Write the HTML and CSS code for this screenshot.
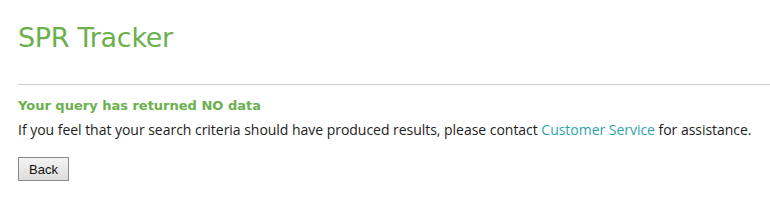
FILE: index.html
```html
<!DOCTYPE html>
<html>
<head>
<meta charset="utf-8">
<link rel="stylesheet" href="styles.css">
</head>
<body>
<div class="page">
  <h1 class="title">SPR Tracker</h1>
  <hr class="rule">
  <h2 class="notice">Your query has returned NO data</h2>
  <p class="message">If you feel that your search criteria should have produced results, please contact <a href="#" class="link">Customer Service</a> for assistance.</p>
  <button class="back">Back</button>
</div>
</body>
</html>
```

FILE: styles.css
```css
html, body {
  margin: 0;
  padding: 0;
  background: #ffffff;
}
.page {
  padding: 20px 0 0 18px;
}
.title {
  margin: 0;
  font-family: "DejaVu Sans", sans-serif;
  font-weight: normal;
  font-size: 27px;
  line-height: 36px;
  color: #6ab04c;
  letter-spacing: -0.3px;
}
.rule {
  margin: 28px 0 0 0;
  border: 0;
  border-top: 1px solid #cfcfcf;
  height: 0;
}
.notice {
  margin: 12px 0 0 0;
  font-family: "DejaVu Sans", sans-serif;
  font-weight: bold;
  font-size: 13px;
  line-height: 18px;
  color: #6ab04c;
}
.message {
  margin: 5px 0 0 0;
  font-family: "Open Sans", sans-serif;
  font-size: 14px;
  line-height: 20px;
  color: #222;
  letter-spacing: -0.03px;
}
.link {
  color: #2fa3ad;
  text-decoration: none;
}
.back {
  margin-top: 17px;
  width: 51px;
  height: 24px;
  font-family: "Liberation Sans", sans-serif;
  font-size: 13px;
  color: #111;
  background: linear-gradient(#f4f4f4, #dcdcdc);
  border: 1px solid #8a8a8a;
  border-radius: 0;
  padding: 0;
}
```
